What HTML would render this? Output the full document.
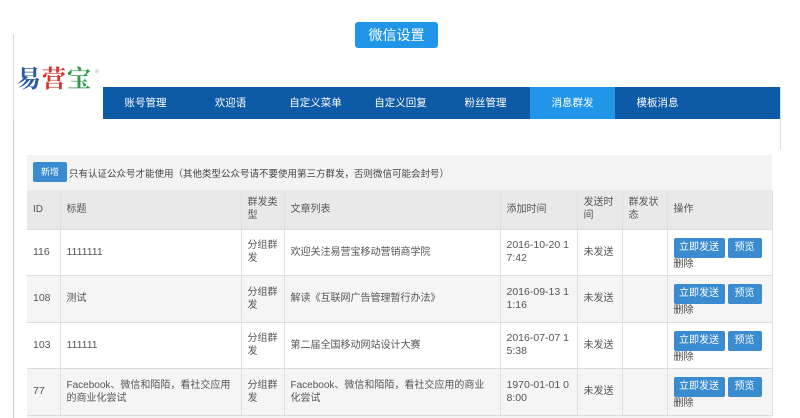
<!DOCTYPE html>
<html><head><meta charset="utf-8"><style>
*{margin:0;padding:0;box-sizing:border-box}
body{width:800px;height:418px;overflow:hidden;background:#fff;font-family:"Liberation Sans","Noto Sans CJK SC",sans-serif;font-size:10px;color:#555;position:relative}
.abs{position:absolute}
.btnTop{left:355px;top:22px;width:83px;height:26px;background:#2196e8;color:#fff;border-radius:3px;font-size:14px;text-align:center;line-height:26px}
.logo{left:13px;top:34px;width:91px;height:86px;border-left:1px solid #ddd}
.logo span{position:absolute;top:23px;font-size:24px;font-weight:bold;font-family:"Noto Serif CJK SC",serif;line-height:40px}
.nav{left:103px;top:87px;width:677px;height:32px;background:#0d5aa7}
.nav div{position:absolute;top:0;height:32px;line-height:32px;color:#fff;font-size:10.5px;text-align:center}
.vline{background:#ccc;width:1px}
.panel{left:27px;top:155px;width:745px;height:263px;background:#f3f3f3}
table{position:absolute;left:27px;top:190px;border-collapse:collapse;width:745px;table-layout:fixed}
td,th{border-right:1px solid #e0e0e0;border-bottom:1px solid #ddd;padding:0 6px;text-align:left;font-weight:normal;vertical-align:middle;line-height:13px;font-size:10px;color:#555;word-break:break-all}
td.n{font-size:10.5px}
th{background:#e9e9e9;height:39px}
td{height:46.5px}
tr.g td{background:#f5f5f5}
tr.w td{background:#fff}
.b{display:inline-block;background:#3a8bd0;color:#fff;height:20px;line-height:20px;border-radius:2px;text-align:center;margin-right:3px;margin-top:4px}
.op{line-height:12px}
.del{display:block;margin-top:1px;color:#444}
</style></head><body>
<div class="abs btnTop">微信设置</div>
<div class="abs logo"><span style="left:3px;color:#2a5aa5">易</span><span style="left:28px;color:#d8322e">营</span><span style="left:53px;color:#2e9a46">宝</span><span style="position:absolute;left:81px;top:20px;font-size:8px;color:#999">®</span></div>
<div class="abs vline" style="left:13px;top:119px;height:299px"></div>
<div class="abs vline" style="left:780px;top:87px;height:62px;background:#ddd"></div>
<div class="abs nav">
<div style="left:0;width:85px">账号管理</div>
<div style="left:85px;width:85px">欢迎语</div>
<div style="left:170px;width:85px">自定义菜单</div>
<div style="left:255px;width:85px">自定义回复</div>
<div style="left:340px;width:85px">粉丝管理</div>
<div style="left:427px;width:85px;background:#2196e8">消息群发</div>
<div style="left:512px;width:85px">模板消息</div>
</div>
<div class="abs panel"></div>
<div class="abs" style="left:33px;top:162px;width:34px;height:20px;background:#3a8bd0;color:#fff;border-radius:2px;text-align:center;line-height:20px;font-size:9px">新增</div>
<div class="abs" style="left:69px;top:166px;font-size:9.5px;color:#444">只有认证公众号才能使用（其他类型公众号请不要使用第三方群发，否则微信可能会封号）</div>
<table>
<colgroup><col style="width:33px"><col style="width:181px"><col style="width:43px"><col style="width:216px"><col style="width:77px"><col style="width:45px"><col style="width:45px"><col style="width:105px"></colgroup>
<tr><th>ID</th><th>标题</th><th>群发类型</th><th>文章列表</th><th>添加时间</th><th>发送时间</th><th>群发状态</th><th>操作</th></tr>
<tr class="w"><td class="n">116</td><td class="n">1111111</td><td>分组群发</td><td>欢迎关注易营宝移动营销商学院</td><td class="n">2016-10-20 17:42</td><td>未发送</td><td></td><td class="op"><span class="b" style="width:51px">立即发送</span><span class="b" style="width:34px">预览</span><span class="del">删除</span></td></tr>
<tr class="g"><td class="n">108</td><td>测试</td><td>分组群发</td><td>解读《互联网广告管理暂行办法》</td><td class="n">2016-09-13 11:16</td><td>未发送</td><td></td><td class="op"><span class="b" style="width:51px">立即发送</span><span class="b" style="width:34px">预览</span><span class="del">删除</span></td></tr>
<tr class="w"><td class="n">103</td><td class="n">111111</td><td>分组群发</td><td>第二届全国移动网站设计大赛</td><td class="n">2016-07-07 15:38</td><td>未发送</td><td></td><td class="op"><span class="b" style="width:51px">立即发送</span><span class="b" style="width:34px">预览</span><span class="del">删除</span></td></tr>
<tr class="g"><td class="n">77</td><td>Facebook、微信和陌陌，看社交应用的商业化尝试</td><td>分组群发</td><td>Facebook、微信和陌陌，看社交应用的商业化尝试</td><td class="n">1970-01-01 08:00</td><td>未发送</td><td></td><td class="op"><span class="b" style="width:51px">立即发送</span><span class="b" style="width:34px">预览</span><span class="del">删除</span></td></tr>
</table>
</body></html>
